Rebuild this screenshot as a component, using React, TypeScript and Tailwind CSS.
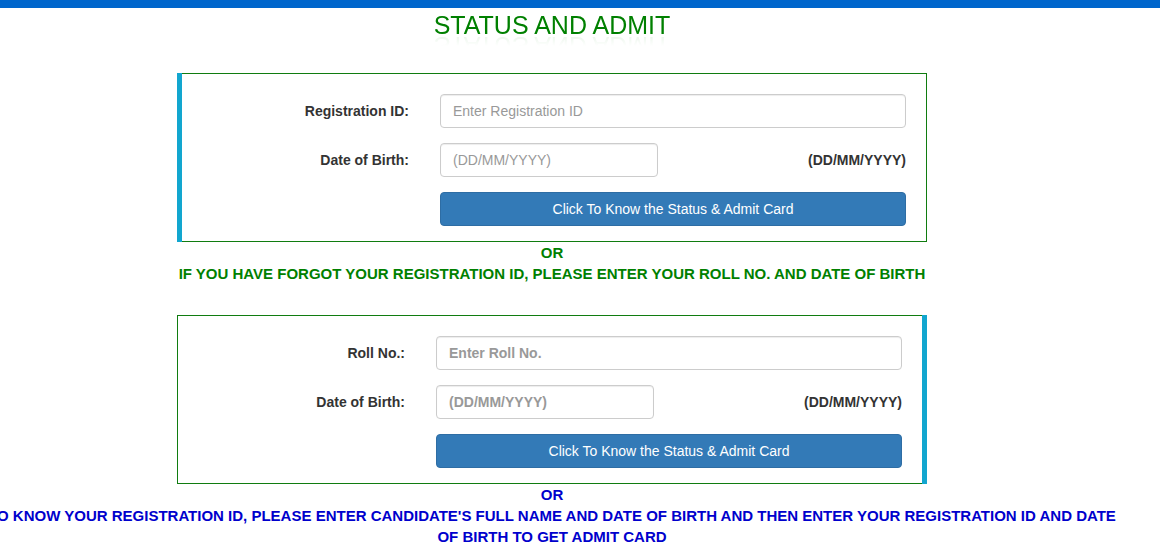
import React from 'react';

type FieldRow = {
  label: string;
  placeholder: string;
  isDate?: boolean;
};

interface LookupPanelProps {
  rows: FieldRow[];
  accent: 'left' | 'right';
  boldPlaceholder?: boolean;
}

const LookupPanel: React.FC<LookupPanelProps> = ({ rows, accent, boldPlaceholder }) => {
  const inputClass =
    'h-[34px] rounded-[4px] border border-[#cccccc] bg-white px-[12px] text-[14px] text-[#555] shadow-[inset_0_1px_1px_rgba(0,0,0,0.075)] outline-none placeholder:text-[#999999] ' +
    (boldPlaceholder ? 'placeholder:font-bold' : '');

  const bar = <div className="w-[5px] shrink-0 bg-[#12a6cf]" />;

  return (
    <div className="flex w-[750px]">
      {accent === 'left' && bar}
      <div
        className={
          'flex-1 border-[#107c10] border-y pt-[20px] pb-[15px] pr-[20px] ' +
          (accent === 'left' ? 'border-r' : 'border-l')
        }
      >
        <div className="flex flex-col gap-[15px]">
          {rows.map((row) => (
            <div key={row.label} className="flex items-center">
              <label className="w-[227px] shrink-0 text-right text-[14px] font-bold text-[#333333]">
                {row.label}
              </label>
              <div className="ml-[31px] flex flex-1 items-center justify-between">
                {row.isDate ? (
                  <>
                    <input type="text" placeholder={row.placeholder} className={inputClass + ' w-[218px]'} />
                    <span className="text-[14px] font-bold text-[#333333]">(DD/MM/YYYY)</span>
                  </>
                ) : (
                  <input type="text" placeholder={row.placeholder} className={inputClass + ' w-full'} />
                )}
              </div>
            </div>
          ))}
          <div className="flex">
            <div className="w-[227px] shrink-0" />
            <button
              type="button"
              className="ml-[31px] h-[34px] flex-1 rounded-[4px] border border-[#2e6da4] bg-[#337ab7] text-[14px] text-white"
            >
              Click To Know the Status &amp; Admit Card
            </button>
          </div>
        </div>
      </div>
      {accent === 'right' && bar}
    </div>
  );
};

export default function App() {
  return (
    <div className="min-h-[554px] overflow-hidden bg-white font-['Liberation_Sans',Arial,sans-serif]">
      <div className="h-[8px] bg-[#0066cc]" />
      <div className="-ml-[28px] w-[1160px] px-[13px]">
        <div className="flex flex-col items-center">
          <h1 className="mt-[4px] text-[25px] leading-[26px] font-normal text-[#008000] [-webkit-box-reflect:below_-5px_linear-gradient(transparent_50%,rgba(255,255,255,0.1))]">
            STATUS AND ADMIT
          </h1>

          <div className="mt-[35px]">
            <LookupPanel
              accent="left"
              rows={[
                { label: 'Registration ID:', placeholder: 'Enter Registration ID' },
                { label: 'Date of Birth:', placeholder: '(DD/MM/YYYY)', isDate: true },
              ]}
            />
          </div>

          <p className="text-center text-[15px] leading-[21px] font-bold text-[#008000]">OR</p>
          <p className="text-center text-[15px] leading-[21px] font-bold text-[#008000]">
            IF YOU HAVE FORGOT YOUR REGISTRATION ID, PLEASE ENTER YOUR ROLL NO. AND DATE OF BIRTH
          </p>

          <div className="mt-[31px]">
            <LookupPanel
              accent="right"
              boldPlaceholder
              rows={[
                { label: 'Roll No.:', placeholder: 'Enter Roll No.' },
                { label: 'Date of Birth:', placeholder: '(DD/MM/YYYY)', isDate: true },
              ]}
            />
          </div>

          <p className="text-center text-[15px] leading-[21px] font-bold text-[#0000cc]">OR</p>
          <a href="#" className="text-center text-[15px] leading-[21px] font-bold text-[#0000cc]">
            TO KNOW YOUR REGISTRATION ID, PLEASE ENTER CANDIDATE'S FULL NAME AND DATE OF BIRTH AND THEN ENTER YOUR
            REGISTRATION ID AND DATE OF BIRTH TO GET ADMIT CARD
          </a>
        </div>
      </div>
    </div>
  );
}
